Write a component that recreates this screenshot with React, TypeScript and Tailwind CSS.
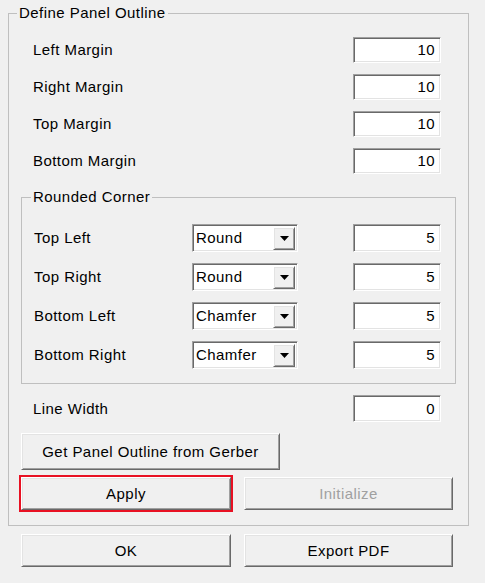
const sunken =
  'border border-t-[#a0a0a0] border-l-[#a0a0a0] border-r-white border-b-white shadow-[inset_1px_1px_0_#696969,inset_-1px_-1px_0_#e3e3e3] bg-white';
const raised =
  'border border-t-white border-l-white border-r-[#696969] border-b-[#696969] shadow-[inset_1px_1px_0_#e3e3e3,inset_-1px_-1px_0_#a0a0a0] bg-[#f0f0f0]';

function NumBox({ value, className = '' }: { value: string; className?: string }) {
  return (
    <div className={`${sunken} flex w-[88px] items-center justify-end pr-[5px] ${className}`}>
      {value}
    </div>
  );
}

function Combo({ value }: { value: string }) {
  return (
    <div className={`${sunken} flex h-[28px] w-[106px] items-center justify-between pl-[3px] pr-[2px]`}>
      <span>{value}</span>
      <div className={`${raised} flex h-[23px] w-[22px] items-center justify-center`}>
        <svg width="9" height="5" viewBox="0 0 9 5">
          <path d="M0 0h9L4.5 5z" fill="#000" />
        </svg>
      </div>
    </div>
  );
}

function Btn({ label, disabled, className = '' }: { label: string; disabled?: boolean; className?: string }) {
  return (
    <button
      className={`${raised} flex h-[33px] items-center justify-center ${disabled ? 'text-[#a0a0a0]' : 'text-black'} ${className}`}
    >
      {label}
    </button>
  );
}

const margins = [
  ['Left Margin', '10'],
  ['Right Margin', '10'],
  ['Top Margin', '10'],
  ['Bottom Margin', '10'],
];

const corners = [
  ['Top Left', 'Round'],
  ['Top Right', 'Round'],
  ['Bottom Left', 'Chamfer'],
  ['Bottom Right', 'Chamfer'],
];

export default function App() {
  return (
    <div className="h-[583px] w-[485px] overflow-hidden bg-[#f0f0f0] pt-[4px] pl-[8px] font-['Liberation_Sans',Arial,sans-serif] text-[15px] leading-[18px] tracking-[0.45px] text-black">
      <fieldset className="w-[461px] border border-[#bfbfbf] px-[12px] pb-[15px]">
        <legend className="-ml-[4px] px-[2px]">Define Panel Outline</legend>

        <div className="flex flex-col gap-[11px] pt-[15px] pl-[12px] pr-[15px]">
          {margins.map(([label, value]) => (
            <div key={label} className="flex h-[26px] items-center justify-between">
              <span>{label}</span>
              <NumBox value={value} className="h-[26px]" />
            </div>
          ))}
        </div>

        <fieldset className="mt-[14px] border border-[#bfbfbf] pl-[12px] pr-[14px] pb-[14px]">
          <legend className="-ml-[3px] px-[2px]">Rounded Corner</legend>
          <div className="flex flex-col gap-[11px] pt-[18px]">
            {corners.map(([label, value]) => (
              <div key={label} className="flex h-[28px] items-center">
                <span className="w-[158px]">{label}</span>
                <Combo value={value} />
                <NumBox value="5" className="ml-auto h-[28px]" />
              </div>
            ))}
          </div>
        </fieldset>

        <div className="mt-[11px] flex h-[27px] items-center justify-between pl-[12px] pr-[15px]">
          <span>Line Width</span>
          <NumBox value="0" className="h-[27px]" />
        </div>

        <button className={`${raised} mt-[11px] flex h-[37px] w-[259px] items-center justify-center`}>
          Get Panel Outline from Gerber
        </button>

        <div className="mt-[7px] flex gap-[13px]">
          <Btn label="Apply" className="w-[210px] outline-2 outline-[#e81123]" />
          <Btn label="Initialize" disabled className="w-[209px]" />
        </div>
      </fieldset>

      <div className="mt-[8px] flex gap-[13px] pl-[13px]">
        <Btn label="OK" className="w-[210px]" />
        <Btn label="Export PDF" className="w-[209px]" />
      </div>
    </div>
  );
}
